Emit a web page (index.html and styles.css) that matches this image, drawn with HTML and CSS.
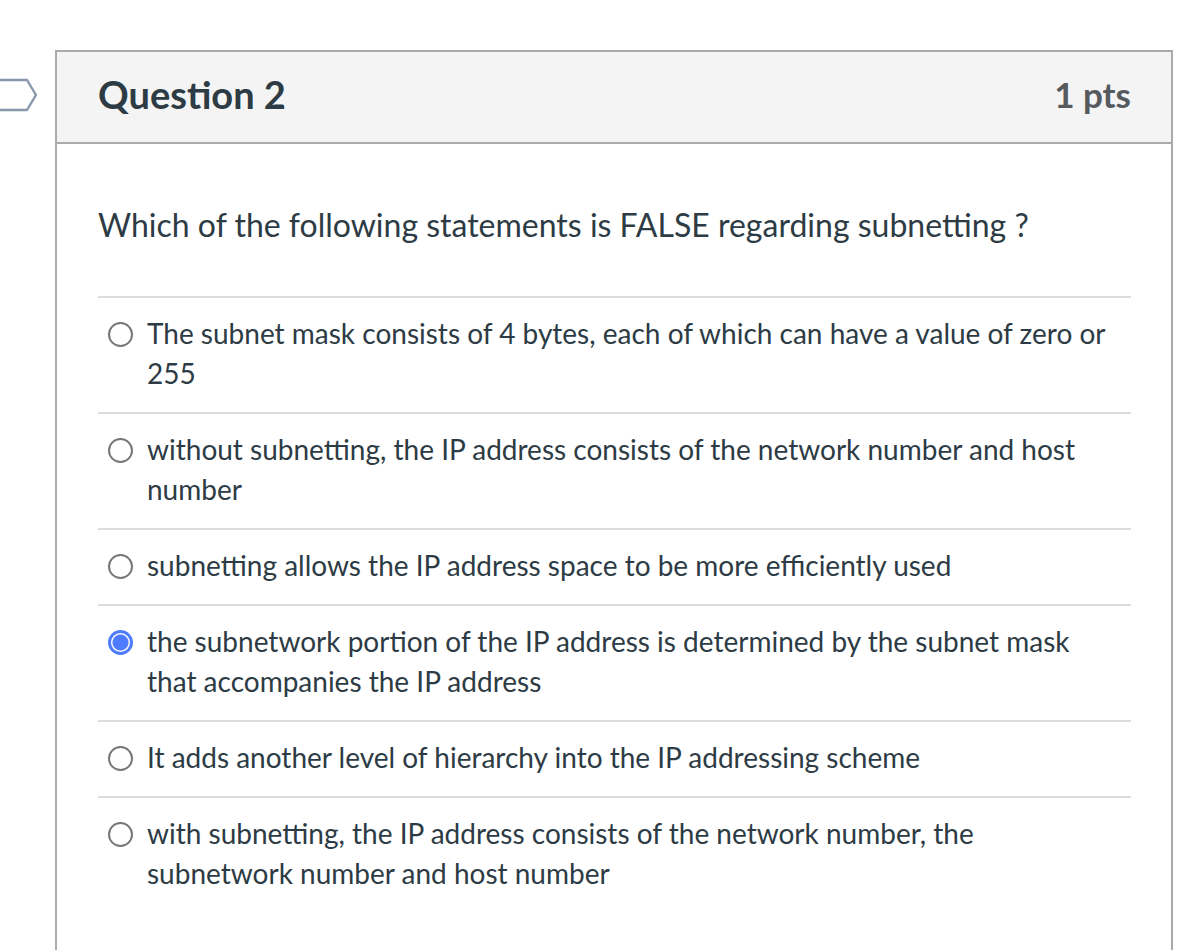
FILE: index.html
```html
<!DOCTYPE html>
<html>
<head>
<meta charset="utf-8">
<link rel="stylesheet" href="styles.css">
</head>
<body>
<div class="page">
  <div class="question">
    <svg class="flag" width="40" height="34" viewBox="0 0 40 34">
      <path d="M-4 2 H27 L36 17 L27 32 H-4" fill="none" stroke="#8797ab" stroke-width="2.4" stroke-linejoin="round"/>
    </svg>
    <div class="q-header">
      <h2 class="q-title">Question 2</h2>
      <span class="q-pts">1 pts</span>
    </div>
    <div class="q-body">
      <p class="q-text">Which of the following statements is FALSE regarding subnetting ?</p>
      <div class="answers">
        <label class="answer"><span class="radio"></span><span class="a-text">The subnet mask consists of 4 bytes, each of which can have a value of zero or 255</span></label>
        <label class="answer"><span class="radio"></span><span class="a-text">without subnetting, the IP address consists of the network number and host number</span></label>
        <label class="answer"><span class="radio"></span><span class="a-text">subnetting allows the IP address space to be more efficiently used</span></label>
        <label class="answer"><span class="radio checked"></span><span class="a-text">the subnetwork portion of the IP address is determined by the subnet mask that accompanies the IP address</span></label>
        <label class="answer"><span class="radio"></span><span class="a-text">It adds another level of hierarchy into the IP addressing scheme</span></label>
        <label class="answer"><span class="radio"></span><span class="a-text">with subnetting, the IP address consists of the network number, the subnetwork number and host number</span></label>
      </div>
    </div>
  </div>
</div>
</body>
</html>
```
FILE: styles.css
```css
html, body {
  margin: 0;
  padding: 0;
  background: #ffffff;
}
body {
  font-family: Lato, "Noto Sans", sans-serif;
  color: #2d3b45;
  overflow: hidden;
  height: 950px;
}
.page {
  padding: 50px 6px 0 55px;
}
.question {
  position: relative;
  border: 2px solid #aaaaaa;
  border-bottom: none;
  height: 920px;
}
.flag {
  position: absolute;
  left: -57px;
  top: 26px;
}
.q-header {
  display: flex;
  align-items: center;
  justify-content: space-between;
  box-sizing: border-box;
  height: 92px;
  padding: 0 40px 7px 41px;
  background: #f4f4f4;
  border-bottom: 2px solid #aaaaaa;
}
.q-title {
  margin: 0;
  font-size: 38px;
  font-weight: 700;
  color: #2d3b45;
}
.q-pts {
  font-size: 35px;
  font-weight: 700;
  color: #555a5f;
}
.q-body {
  padding: 61px 40px 0 41px;
}
.q-text {
  margin: 0 0 51px;
  font-size: 32px;
  line-height: 40px;
}
.answers {
  border-top: 2px solid #dddddd;
}
.answer {
  display: flex;
  align-items: flex-start;
  gap: 14px;
  padding: 15px 18px 19px 10px;
  border-bottom: 2px solid #dddddd;
  font-size: 28px;
  line-height: 40px;
}
.answer:last-child {
  border-bottom: none;
}
.radio {
  flex: none;
  box-sizing: border-box;
  width: 25px;
  height: 25px;
  margin-top: 9px;
  border: 2px solid #777777;
  border-radius: 50%;
  background: #fff;
}
.radio.checked {
  border: 3px solid #4f7cff;
  background: radial-gradient(circle, #4f7cff 0 7.5px, #ffffff 8.5px);
}
.a-text {
  flex: 1;
}
```
